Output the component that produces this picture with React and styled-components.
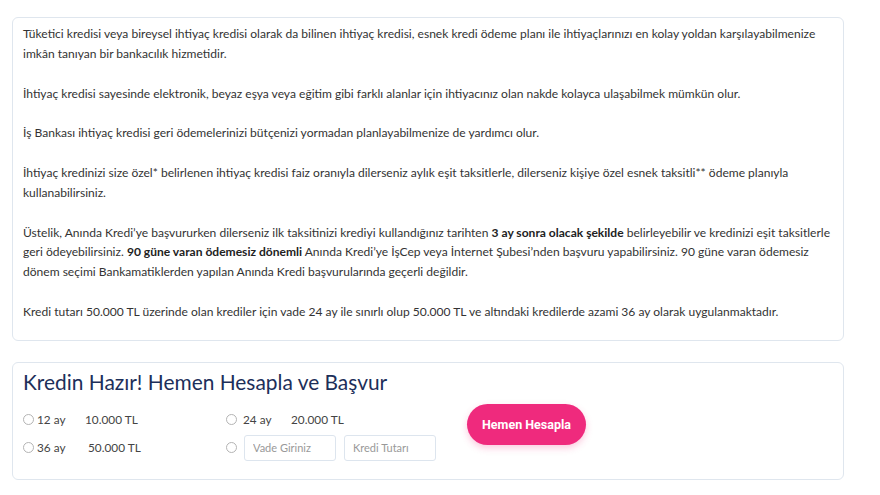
import React from "react"
import styled, { createGlobalStyle } from "styled-components"

const GlobalStyle = createGlobalStyle`
  body {
    margin: 0;
    background: #fff;
    font-family: "Lato", "Open Sans", sans-serif;
    color: #333;
  }
`

const Page = styled.div`
  width: 832px;
  padding: 17px 0 0 12px;
  display: flex;
  flex-direction: column;
  gap: 21px;
`

const Card = styled.div`
  border: 1px solid #dfe6ee;
  border-radius: 6px;
  background: #fff;
  padding: ${props => props.pad || "6px 10px 0 10px"};
`

const Paragraph = styled.p`
  margin: 0 0 19.86px;
  font-size: 12.05px;
  line-height: 19.86px;
  color: #333;
  b {
    font-weight: 700;
    color: #222;
  }
  &:last-child {
    margin-bottom: 18px;
  }
`

const Title = styled.h2`
  margin: 0;
  font-size: 20.9px;
  font-weight: 400;
  color: #1d2f5a;
  line-height: 30px;
`

const FormRow = styled.div`
  display: flex;
  align-items: flex-start;
  margin-top: 13px;
  padding-bottom: 17px;
`

const OptionGrid = styled.div`
  display: grid;
  grid-template-columns: 203px 210px;
  row-gap: 4px;
`

const Option = styled.label`
  display: flex;
  align-items: center;
  height: ${props => props.h || 20}px;
  font-size: 11.8px;
  color: #444;
`

const Radio = styled.span`
  width: 9px;
  height: 9px;
  border: 1px solid #b4b4b4;
  border-radius: 50%;
  margin-right: ${props => props.gap || 3}px;
  flex-shrink: 0;
`

const Term = styled.span`
  width: ${props => props.w}px;
`

const Field = styled.input`
  width: 92px;
  height: 26px;
  box-sizing: border-box;
  border: 1px solid #dde5ee;
  border-radius: 3px;
  padding: 0 8px;
  font-family: inherit;
  font-size: 11px;
  color: #444;
  margin-right: 8px;
  &::placeholder {
    color: #999;
  }
`

const PinkButton = styled.button`
  margin: -6px 0 0 31px;
  width: 119px;
  height: 41px;
  border: none;
  border-radius: 21px;
  background: #ef2a7d;
  color: #fff;
  font-family: "Roboto", sans-serif;
  font-weight: 700;
  font-size: 12.5px;
  box-shadow: 0 3px 7px rgba(239, 42, 125, 0.25);
`

export default function App() {
  return (
    <Page>
      <GlobalStyle />
      <Card>
        <Paragraph>
          Tüketici kredisi veya bireysel ihtiyaç kredisi olarak da bilinen ihtiyaç kredisi, esnek kredi ödeme planı ile ihtiyaçlarınızı en kolay yoldan karşılayabilmenize imkân tanıyan bir bankacılık hizmetidir.
        </Paragraph>
        <Paragraph>
          İhtiyaç kredisi sayesinde elektronik, beyaz eşya veya eğitim gibi farklı alanlar için ihtiyacınız olan nakde kolayca ulaşabilmek mümkün olur.
        </Paragraph>
        <Paragraph>
          İş Bankası ihtiyaç kredisi geri ödemelerinizi bütçenizi yormadan planlayabilmenize de yardımcı olur.
        </Paragraph>
        <Paragraph>
          İhtiyaç kredinizi size özel* belirlenen ihtiyaç kredisi faiz oranıyla dilerseniz aylık eşit taksitlerle, dilerseniz kişiye özel esnek taksitli** ödeme planıyla kullanabilirsiniz.
        </Paragraph>
        <Paragraph>
          Üstelik, Anında Kredi’ye başvururken dilerseniz ilk taksitinizi krediyi kullandığınız tarihten <b>3 ay sonra olacak şekilde</b> belirleyebilir ve kredinizi eşit taksitlerle geri ödeyebilirsiniz. <b>90 güne varan ödemesiz dönemli</b> Anında Kredi’ye İşCep veya İnternet Şubesi’nden başvuru yapabilirsiniz. 90 güne varan ödemesiz dönem seçimi Bankamatiklerden yapılan Anında Kredi başvurularında geçerli değildir.
        </Paragraph>
        <Paragraph>
          Kredi tutarı 50.000 TL üzerinde olan krediler için vade 24 ay ile sınırlı olup 50.000 TL ve altındaki kredilerde azami 36 ay olarak uygulanmaktadır.
        </Paragraph>
      </Card>
      <Card pad="4px 10px 0 10px">
        <Title>Kredin Hazır! Hemen Hesapla ve Başvur</Title>
        <FormRow>
          <OptionGrid>
            <Option>
              <Radio gap={3} />
              <Term w={48}>12 ay</Term>
              10.000 TL
            </Option>
            <Option>
              <Radio gap={6} />
              <Term w={48}>24 ay</Term>
              20.000 TL
            </Option>
            <Option h={28}>
              <Radio gap={3} />
              <Term w={51}>36 ay</Term>
              50.000 TL
            </Option>
            <Option h={28}>
              <Radio gap={7} />
              <Field placeholder="Vade Giriniz" />
              <Field placeholder="Kredi Tutarı" />
            </Option>
          </OptionGrid>
          <PinkButton>Hemen Hesapla</PinkButton>
        </FormRow>
      </Card>
    </Page>
  )
}
